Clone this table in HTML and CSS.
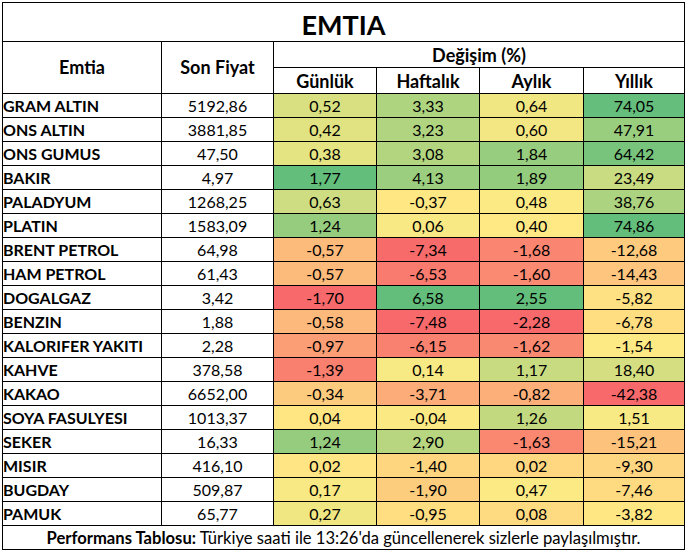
FILE: index.html
```html
<!DOCTYPE html>
<html lang="tr">
<head>
<meta charset="utf-8">
<title>EMTIA</title>
<link rel="stylesheet" href="styles.css">
</head>
<body>
<table class="perf">
  <colgroup>
    <col class="c-name"><col class="c-price"><col class="c-d"><col class="c-w"><col class="c-m"><col class="c-y">
  </colgroup>
  <thead>
    <tr class="r-title"><th colspan="6" class="title">EMTIA</th></tr>
    <tr class="r-head1">
      <th rowspan="2" class="head">Emtia</th>
      <th rowspan="2" class="head">Son Fiyat</th>
      <th colspan="4" class="head sub">Değişim (%)</th>
    </tr>
    <tr class="r-head2">
      <th class="head sub">Günlük</th>
      <th class="head sub">Haftalık</th>
      <th class="head sub">Aylık</th>
      <th class="head sub">Yıllık</th>
    </tr>
  </thead>
  <tbody>
    <tr><td class="name">GRAM ALTIN</td><td class="num">5192,86</td><td class="num" style="background:rgb(216,224,130)">0,52</td><td class="num" style="background:rgb(174,212,127)">3,33</td><td class="num" style="background:rgb(240,231,131)">0,64</td><td class="num" style="background:rgb(101,190,123)">74,05</td></tr>
    <tr><td class="name">ONS ALTIN</td><td class="num">3881,85</td><td class="num" style="background:rgb(225,226,130)">0,42</td><td class="num" style="background:rgb(176,212,127)">3,23</td><td class="num" style="background:rgb(243,231,131)">0,60</td><td class="num" style="background:rgb(153,206,126)">47,91</td></tr>
    <tr><td class="name">ONS GUMUS</td><td class="num">47,50</td><td class="num" style="background:rgb(229,228,131)">0,38</td><td class="num" style="background:rgb(179,213,128)">3,08</td><td class="num" style="background:rgb(151,205,126)">1,84</td><td class="num" style="background:rgb(120,196,124)">64,42</td></tr>
    <tr><td class="name">BAKIR</td><td class="num">4,97</td><td class="num" style="background:rgb(99,190,123)">1,77</td><td class="num" style="background:rgb(155,206,126)">4,13</td><td class="num" style="background:rgb(148,204,126)">1,89</td><td class="num" style="background:rgb(202,220,129)">23,49</td></tr>
    <tr><td class="name">PALADYUM</td><td class="num">1268,25</td><td class="num" style="background:rgb(206,221,129)">0,63</td><td class="num" style="background:rgb(255,232,131)">-0,37</td><td class="num" style="background:rgb(252,234,132)">0,48</td><td class="num" style="background:rgb(172,211,127)">38,76</td></tr>
    <tr><td class="name">PLATIN</td><td class="num">1583,09</td><td class="num" style="background:rgb(149,204,126)">1,24</td><td class="num" style="background:rgb(249,233,132)">0,06</td><td class="num" style="background:rgb(255,233,132)">0,40</td><td class="num" style="background:rgb(99,190,123)">74,86</td></tr>
    <tr><td class="name">BRENT PETROL</td><td class="num">64,98</td><td class="num" style="background:rgb(252,186,123)">-0,57</td><td class="num" style="background:rgb(248,107,107)">-7,34</td><td class="num" style="background:rgb(250,134,113)">-1,68</td><td class="num" style="background:rgb(253,202,126)">-12,68</td></tr>
    <tr><td class="name">HAM PETROL</td><td class="num">61,43</td><td class="num" style="background:rgb(252,186,123)">-0,57</td><td class="num" style="background:rgb(249,122,110)">-6,53</td><td class="num" style="background:rgb(250,138,113)">-1,60</td><td class="num" style="background:rgb(253,197,125)">-14,43</td></tr>
    <tr><td class="name">DOGALGAZ</td><td class="num">3,42</td><td class="num" style="background:rgb(248,105,107)">-1,70</td><td class="num" style="background:rgb(99,190,123)">6,58</td><td class="num" style="background:rgb(99,190,123)">2,55</td><td class="num" style="background:rgb(254,225,130)">-5,82</td></tr>
    <tr><td class="name">BENZIN</td><td class="num">1,88</td><td class="num" style="background:rgb(252,185,123)">-0,58</td><td class="num" style="background:rgb(248,105,107)">-7,48</td><td class="num" style="background:rgb(248,105,107)">-2,28</td><td class="num" style="background:rgb(254,222,129)">-6,78</td></tr>
    <tr><td class="name">KALORIFER YAKITI</td><td class="num">2,28</td><td class="num" style="background:rgb(251,158,117)">-0,97</td><td class="num" style="background:rgb(249,129,112)">-6,15</td><td class="num" style="background:rgb(250,137,113)">-1,62</td><td class="num" style="background:rgb(253,234,132)">-1,54</td></tr>
    <tr><td class="name">KAHVE</td><td class="num">378,58</td><td class="num" style="background:rgb(249,127,111)">-1,39</td><td class="num" style="background:rgb(247,233,132)">0,14</td><td class="num" style="background:rgb(201,219,129)">1,17</td><td class="num" style="background:rgb(213,223,130)">18,40</td></tr>
    <tr><td class="name">KAKAO</td><td class="num">6652,00</td><td class="num" style="background:rgb(253,203,126)">-0,34</td><td class="num" style="background:rgb(252,172,120)">-3,71</td><td class="num" style="background:rgb(252,175,120)">-0,82</td><td class="num" style="background:rgb(248,105,107)">-42,38</td></tr>
    <tr><td class="name">SOYA FASULYESI</td><td class="num">1013,37</td><td class="num" style="background:rgb(255,230,131)">0,04</td><td class="num" style="background:rgb(251,234,132)">-0,04</td><td class="num" style="background:rgb(194,217,128)">1,26</td><td class="num" style="background:rgb(247,233,132)">1,51</td></tr>
    <tr><td class="name">SEKER</td><td class="num">16,33</td><td class="num" style="background:rgb(149,204,126)">1,24</td><td class="num" style="background:rgb(184,214,128)">2,90</td><td class="num" style="background:rgb(250,136,113)">-1,63</td><td class="num" style="background:rgb(253,194,124)">-15,21</td></tr>
    <tr><td class="name">MISIR</td><td class="num">416,10</td><td class="num" style="background:rgb(255,229,131)">0,02</td><td class="num" style="background:rgb(254,214,128)">-1,40</td><td class="num" style="background:rgb(254,215,128)">0,02</td><td class="num" style="background:rgb(254,213,128)">-9,30</td></tr>
    <tr><td class="name">BUGDAY</td><td class="num">509,87</td><td class="num" style="background:rgb(249,233,132)">0,17</td><td class="num" style="background:rgb(253,205,126)">-1,90</td><td class="num" style="background:rgb(252,234,132)">0,47</td><td class="num" style="background:rgb(254,219,129)">-7,46</td></tr>
    <tr><td class="name">PAMUK</td><td class="num">65,77</td><td class="num" style="background:rgb(240,231,131)">0,27</td><td class="num" style="background:rgb(254,222,129)">-0,95</td><td class="num" style="background:rgb(254,218,129)">0,08</td><td class="num" style="background:rgb(255,231,131)">-3,82</td></tr>
  </tbody>
  <tfoot>
    <tr class="r-foot"><td colspan="6" class="foot"><b>Performans Tablosu:</b> Türkiye saati ile 13:26'da güncellenerek sizlerle paylaşılmıştır.</td></tr>
  </tfoot>
</table>
</body>
</html>
```

FILE: styles.css
```css
html, body {
  background: #ffffff;
}
body {
  margin: 2px;
  font-family: Lato, "Noto Sans", sans-serif;
  color: #000;
}
.perf {
  border-collapse: collapse;
  table-layout: fixed;
  width: 683px;
  font-size: 16px;
  line-height: 20px;
}
.c-name { width: 159px; }
.c-price { width: 112px; }
.c-d { width: 103px; }
.c-w { width: 103px; }
.c-m { width: 104px; }
.c-y { width: 101px; }

.perf th, .perf td {
  border: 1px solid #000;
  padding: 0 0 1px 0;
  white-space: nowrap;
  overflow: hidden;
}
.r-title { height: 39px; }
.title {
  font-size: 27px;
  font-weight: 700;
  line-height: 30px;
  text-align: center;
  vertical-align: bottom;
  padding-bottom: 3px;
}
.r-head1 { height: 26px; }
.r-head2 { height: 26px; }
.head {
  font-size: 18px;
  line-height: 22px;
  font-weight: 700;
  text-align: center;
  vertical-align: middle;
}
.head.sub {
  vertical-align: bottom;
  padding-bottom: 1px;
}
.perf tbody tr { height: 24px; }
.name {
  font-weight: 700;
  text-align: left;
  padding-left: 6px;
  vertical-align: bottom;
}
.num {
  text-align: center;
  vertical-align: bottom;
}
.r-foot { height: 24px; }
.foot {
  font-size: 16.6px;
  text-align: center;
  vertical-align: bottom;
}
.foot b { font-weight: 700; }
```
